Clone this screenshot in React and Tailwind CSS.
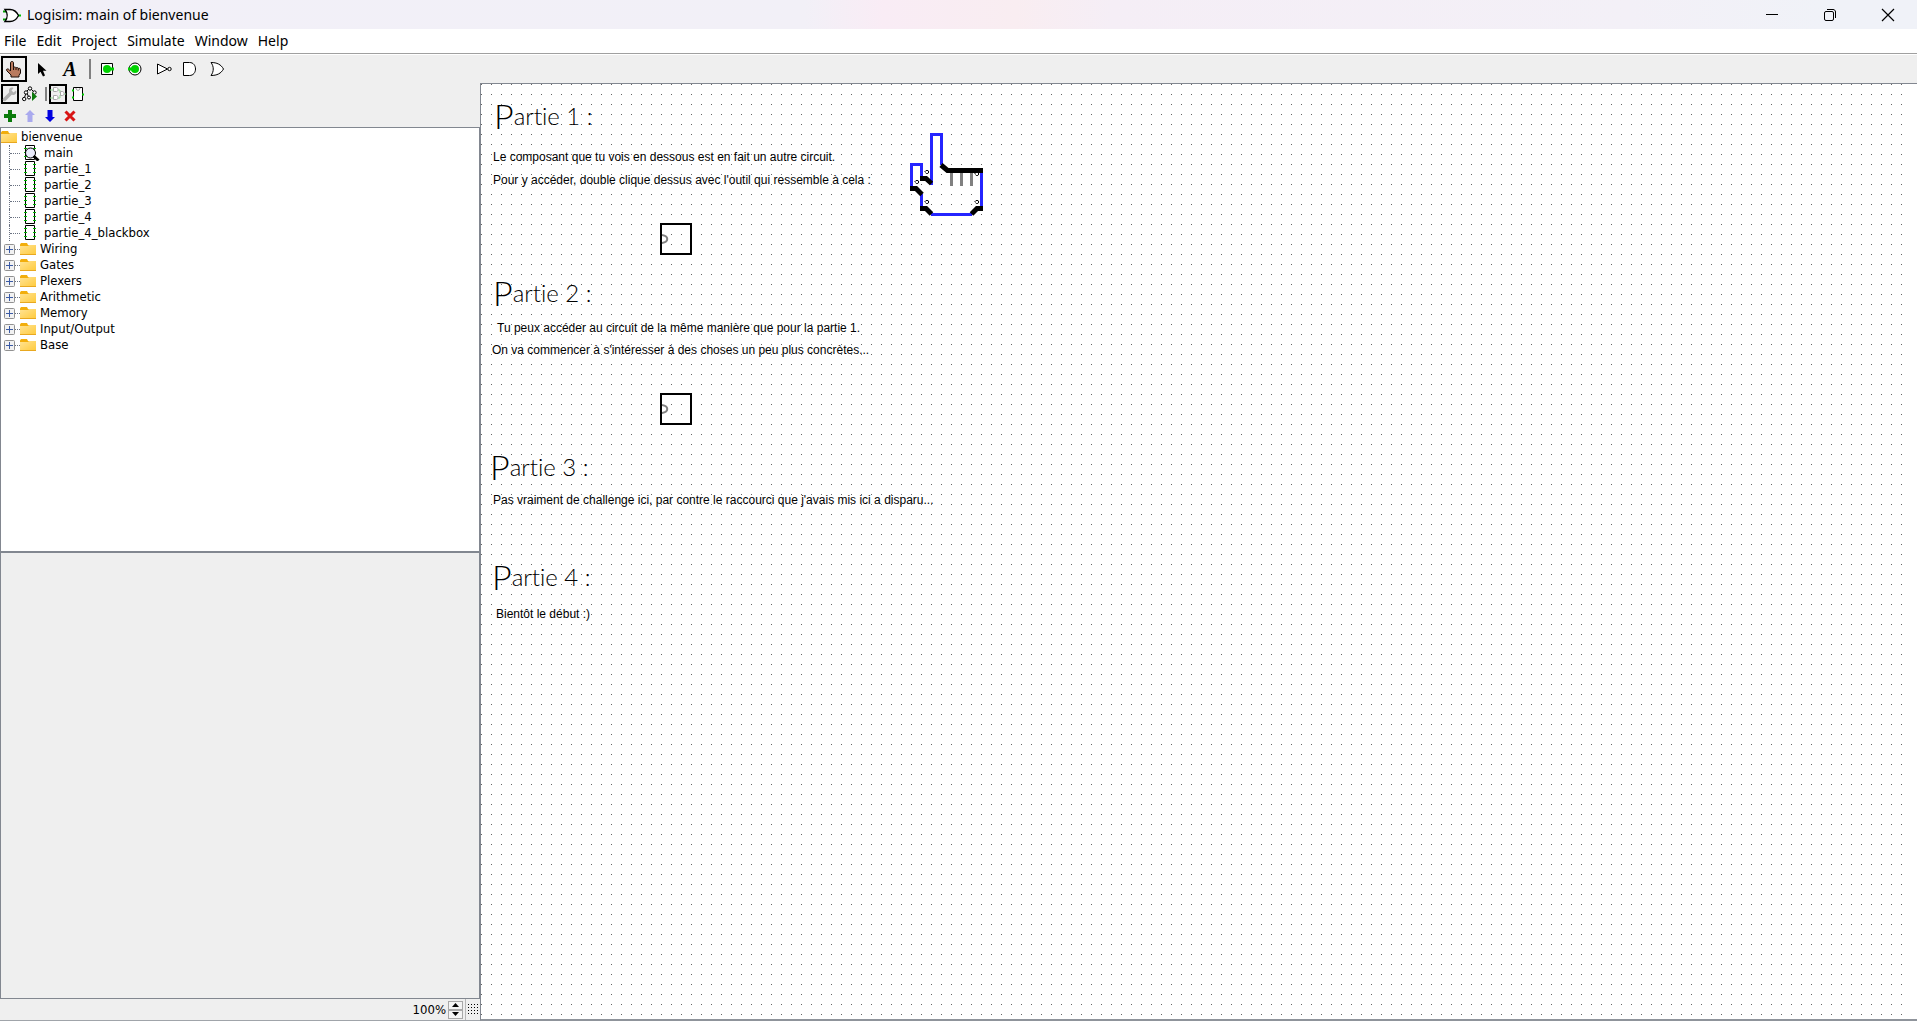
import React, { useState } from "react";

const MENUS = ["File", "Edit", "Project", "Simulate", "Window", "Help"];
const CIRCUITS = ["main", "partie_1", "partie_2", "partie_3", "partie_4", "partie_4_blackbox"];
const LIBRARIES = ["Wiring", "Gates", "Plexers", "Arithmetic", "Memory", "Input/Output", "Base"];

function Svg({ size = 20, children }) {
  return (
    <svg width={size} height={size} viewBox={`0 0 ${size} ${size}`} className="block shrink-0" fill="none" aria-hidden="true">
      {children}
    </svg>
  );
}

function LogoIcon() {
  return (
    <Svg size={18}>
      <path d="M0 5.500h4M0 13.500h4" stroke="#00a000" strokeWidth="2" />
      <path d="M14 9.500h4" stroke="#00c000" strokeWidth="2" />
      <path d="M2 3.500h5c4 0 7 3 8.500 6-1.500 3-4.500 6-8.500 6H2c3-4 3-8 0-12z" fill="#fff" stroke="#000" strokeWidth="1.300" />
    </Svg>
  );
}

function HandIcon() {
  return (
    <Svg>
      <path
        d="M8 2.500c1 0 1.500.5 1.500 1.500v4.500c1-.8 2-.6 2.500.3 1-.5 2-.3 2.300.6 1.200-.4 2.200.1 2.200 1.300V14l-1.500 2.500V18h-8v-2L3 12c-.7-1-.7-1.700 0-2 1-.3 2 .2 3.500 2V4c0-1 .5-1.500 1.500-1.500z"
        fill="#b97a5e"
        stroke="#1a0d08"
      />
      <path d="M9.500 8.500V11M12 9v2M14.300 9.500v2" stroke="#1a0d08" />
    </Svg>
  );
}

function ArrowIcon() {
  return (
    <Svg>
      <path d="M6 4v11l2.500-2.300L11 17.500l2-1-2-4.700h3.500z" fill="#000" />
    </Svg>
  );
}

function InputPinIcon() {
  return (
    <Svg>
      <path d="M4.500 4.500h11v11h-11z" fill="#fff" stroke="#000" />
      <circle cx="10" cy="10" r="4" fill="#00d200" />
      <path d="M13 10h4" stroke="#00d200" strokeWidth="3" />
    </Svg>
  );
}

function OutputPinIcon() {
  return (
    <Svg>
      <circle cx="10" cy="10" r="6" fill="#fff" stroke="#000" />
      <circle cx="10" cy="10" r="4" fill="#00d200" />
      <path d="M3 10h4" stroke="#00d200" strokeWidth="3" />
    </Svg>
  );
}

function NotIcon() {
  return (
    <Svg>
      <path d="M4.500 5v10l10-5z" fill="#fff" stroke="#000" />
      <circle cx="16.500" cy="10" r="1.700" fill="#fff" stroke="#000" />
    </Svg>
  );
}

function AndIcon() {
  return (
    <Svg>
      <path d="M2.500 3.500h6c8 0 8 13 0 13h-6z" fill="#fff" stroke="#000" />
    </Svg>
  );
}

function OrIcon() {
  return (
    <Svg>
      <path d="M2 3.500c6 0 10 2 12.500 6.500C12 14.500 8 16.500 2 16.500c3-4 3-9 0-13z" fill="#fff" stroke="#000" />
    </Svg>
  );
}

function WrenchIcon() {
  return (
    <Svg size={16}>
      <path d="M2.500 13.500L9 7" stroke="#b0b0b0" strokeWidth="3.500" strokeLinecap="round" />
      <path d="M14 4.500l-2.500 2-2-2 2-2.500C9 .8 6.500 2.500 7 5.500 7.500 8 9.500 9.500 12 9c2-.6 3-2.500 2-4.500z" fill="#b0b0b0" />
    </Svg>
  );
}

function SimTreeIcon() {
  return (
    <Svg size={16}>
      <path d="M7 3L3 7M9 3l4 4M4 7l-2 6M5 7l2 5" stroke="#000" />
      <circle cx="8" cy="2.500" r="1.700" fill="#fff" stroke="#000" />
      <circle cx="4" cy="6.500" r="1.700" fill="#fff" stroke="#000" />
      <circle cx="12.500" cy="6.500" r="1.700" fill="#fff" stroke="#000" />
      <circle cx="2.200" cy="13" r="1.700" fill="#fff" stroke="#000" />
      <circle cx="7" cy="11.500" r="1.500" fill="#fff" stroke="#000" />
      <path d="M10 6v9l5-4.500z" fill="#0b7a0b" />
    </Svg>
  );
}

function LayoutIcon() {
  return (
    <Svg size={16}>
      <path d="M0 4h3M0 12h3M8 4h2v3h2M8 12h2V9h2M14 8h2" stroke="#8fdc8f" />
      <path d="M3.500 1.500h3c2 0 2 4 0 4h-3zM3.500 9.500h3c2 0 2 4 0 4h-3zM10.500 5.500h2c2 0 2 4 0 4h-2z" fill="#fff" stroke="#a8a8a8" />
    </Svg>
  );
}

function AppearanceIcon() {
  return (
    <Svg size={16}>
      <path d="M3.500 1.500h9v13h-9z" fill="#fff" stroke="#000" />
      <path d="M6 2c0 3 4 3 4 0" stroke="#999" />
      <path d="M2 4.500h2M2 11.500h2M12 8.500h2" stroke="#00c800" strokeWidth="2" />
    </Svg>
  );
}

function FolderIcon() {
  return (
    <svg width="16" height="14" viewBox="0 0 16 14" className="block shrink-0" aria-hidden="true">
      <defs>
        <linearGradient id="folder" x1="0" y1="0" x2="1" y2="1">
          <stop offset="0" stopColor="#ffe394" />
          <stop offset="1" stopColor="#ffcb3d" />
        </linearGradient>
      </defs>
      <path d="M0 2.500L1 1h6l1 2h8v4H0z" fill="#f2ae0c" />
      <path d="M0 4h8l1-1h7v9.500H0z" fill="url(#folder)" />
      <path d="M0 12.500h16" stroke="#e8a820" />
    </svg>
  );
}

function CircuitIcon({ active }) {
  return (
    <svg width="16" height="16" viewBox="0 0 16 16" className="block shrink-0" fill="none" aria-hidden="true">
      <path d="M1.500 .5h9v14h-9z" fill="#fff" stroke="#000" />
      <path d="M0 3.500h3M0 7.500h3M0 11.500h3M9 3.500h3M9 7.500h3M9 11.500h3" stroke="#00b400" />
      {active && (
        <>
          <circle cx="6.500" cy="8" r="5" fill="#e9ebfb" stroke="#000" />
          <path d="M9.500 11l5 4.500" stroke="#000" strokeWidth="3" />
        </>
      )}
    </svg>
  );
}

function ToolButton({ label, active, children }) {
  return (
    <button
      type="button"
      aria-label={label}
      aria-pressed={!!active}
      className={
        active
          ? "mx-px flex size-[26px] items-center justify-center border-2 border-black"
          : "mx-px flex size-[26px] items-center justify-center"
      }
    >
      {children}
    </button>
  );
}

function SmallButton({ label, active, children }) {
  return (
    <button
      type="button"
      aria-label={label}
      className={
        active
          ? "mx-px flex h-5 w-[18px] items-center justify-center border-2 border-black"
          : "mx-px flex h-5 w-[18px] items-center justify-center"
      }
    >
      {children}
    </button>
  );
}

function TitleBar() {
  return (
    <header className="flex h-[29px] shrink-0 items-center justify-between bg-[linear-gradient(90deg,#f2f0f8_0%,#f2f0f7_42%,#f9ecf5_46%,#f9edf1_53%,#f5eef6_58%,#f3f0f7_85%,#f0f2f8_95%)]">
      <div className="flex h-7 items-center gap-[6px] pl-[3px]">
        <LogoIcon />
        <h1 className="text-[14px] leading-5">Logisim: main of bienvenue</h1>
      </div>
      <div className="flex h-7">
        <button type="button" aria-label="Minimize" className="flex w-[58px] items-center justify-center">
          <Svg size={14}><path d="M1 6.500h12" stroke="#000" /></Svg>
        </button>
        <button type="button" aria-label="Restore" className="flex w-[58px] items-center justify-center">
          <Svg size={14}>
            <rect x="1.500" y="3.500" width="9" height="9" rx="1.500" stroke="#000" />
            <path d="M4 1.500h6c1.500 0 2.500 1 2.500 2.500v6" stroke="#000" />
          </Svg>
        </button>
        <button type="button" aria-label="Close" className="flex w-[58px] items-center justify-center">
          <Svg size={14}><path d="M1 1l12 12M13 1L1 13" stroke="#000" strokeWidth="1.200" /></Svg>
        </button>
      </div>
    </header>
  );
}

function Explorer() {
  return (
    <ul className="h-[425px] shrink-0 border border-[#828790] bg-white pt-px font-['DejaVu_Sans_Condensed','DejaVu_Sans',sans-serif] text-[13px] leading-4">
      <li>
        <div className="flex h-4 items-center gap-1">
          <FolderIcon />
          <span>bienvenue</span>
        </div>
        <ul>
          {CIRCUITS.map((name) => (
            <li key={name} className="ml-2 flex h-4 items-center border-l border-dotted border-gray-500">
              <span className="w-[10px] border-t border-dotted border-gray-500" />
              <span className="ml-1 flex w-5 shrink-0">
                <CircuitIcon active={name === "main"} />
              </span>
              <span>{name}</span>
            </li>
          ))}
          {LIBRARIES.map((name) => (
            <li key={name} className="flex h-4 items-center pl-[3px]">
              <button type="button" aria-label={`Expand ${name}`} className="block">
                <Svg size={11}>
                  <rect x=".5" y=".5" width="10" height="10" rx="1" fill="#f2f2f2" stroke="#919191" />
                  <path d="M2 5.500h7M5.500 2v7" stroke="#3b5ba5" />
                </Svg>
              </button>
              <span className="w-[5px] border-t border-dotted border-gray-500" />
              <FolderIcon />
              <span className="ml-1">{name}</span>
            </li>
          ))}
        </ul>
      </li>
    </ul>
  );
}

function ZoomBar() {
  const [zoom, setZoom] = useState(100);
  return (
    <div className="flex h-[22px] shrink-0 items-center justify-end border-b border-[#a0a4aa]">
      <input
        aria-label="Zoom"
        value={`${zoom}%`}
        onChange={(e) => setZoom(parseInt(e.target.value, 10) || 0)}
        className="min-w-0 grow bg-transparent pr-[2px] text-right font-['DejaVu_Sans_Condensed','DejaVu_Sans',sans-serif] text-[13px] leading-4 outline-none"
      />
      <div className="flex w-[15px] flex-col">
        <button type="button" aria-label="Zoom in" onClick={() => setZoom(zoom + 10)} className="flex h-[9px] items-center justify-center border border-[#a8a8a8] bg-[#f4f4f4]">
          <svg width="7" height="4" viewBox="0 0 7 4"><path d="M0 4L3.500 0 7 4z" /></svg>
        </button>
        <button type="button" aria-label="Zoom out" onClick={() => setZoom(zoom - 10)} className="flex h-[9px] items-center justify-center border border-[#a8a8a8] bg-[#f4f4f4]">
          <svg width="7" height="4" viewBox="0 0 7 4"><path d="M0 0h7L3.500 4z" /></svg>
        </button>
      </div>
      <button type="button" aria-label="Show grid" className="ml-[2px] flex h-full w-[15px] items-center justify-center border-l border-[#b8b8b8]">
        <Svg size={11}>
          <path d="M0 .5h11M0 3.500h11M0 6.500h11M0 9.500h11" stroke="#000" strokeDasharray="1 2" />
        </Svg>
      </button>
    </div>
  );
}

function Heading({ className, number }) {
  return (
    <h2 className={`absolute whitespace-pre font-['Lato',sans-serif] text-[24px] leading-10 font-light [font-variant-ligatures:none] ${className}`}>
      <span className="align-[-4px] text-[34px]">P</span>artie {number} :
    </h2>
  );
}

function Note({ className, children }) {
  return (
    <p className={`absolute font-['Liberation_Sans',Arial,sans-serif] text-[12px] leading-4 whitespace-nowrap ${className}`}>
      {children}
    </p>
  );
}

function Subcircuit({ className, label }) {
  return (
    <button type="button" aria-label={label} className={`absolute size-8 border-2 border-black ${className}`}>
      <svg width="28" height="28" viewBox="0 0 28 28" fill="none" className="block">
        <path d="M0 10c7 1 7 7 0 8" stroke="#808080" strokeWidth="2" />
      </svg>
    </button>
  );
}

function BigHand() {
  const loops = [[26, 47], [16, 57], [26, 77], [76, 77], [76, 49]];
  return (
    <svg width="90" height="95" viewBox="0 0 90 95" fill="none" className="absolute top-[41px] left-[419px]" aria-label="Poke tool">
      <g stroke="#2424ff" strokeWidth="3">
        <path d="M31.500 60V9.500h10V40M11.500 62V39.500h10V52M21.500 69v12M31 89.500h41M81.500 48v33" />
      </g>
      <g stroke="#808080" strokeWidth="3">
        <path d="M51.500 48v13M61.500 48v13M71.500 48v13" />
      </g>
      <g stroke="#000" strokeWidth="5">
        <path d="M41 40l6.500 5.500H83M20 53.500h6l5.500 5M10 63.500h6l6 6M20 83.500h6l5.500 5.500M83 83.500h-6L71.500 89" />
      </g>
      <g stroke="#000">
        {loops.map(([x, y]) => (
          <path key={`${x}-${y}`} d={`M${x - 1.5} ${y}l1.500-1.500h2l.8 1.500-1 1.500h-1.500l-.8-1`} />
        ))}
      </g>
    </svg>
  );
}

function Canvas() {
  return (
    <main className="min-w-0 grow border-t border-b-2 border-l border-[#828790] border-b-[#8f949b] bg-white">
      <div className="relative mr-[15px] h-full overflow-hidden">
        <svg width="100%" height="100%" className="absolute inset-0" aria-hidden="true">
          <defs>
            <pattern id="grid" width="10" height="10" patternUnits="userSpaceOnUse">
              <rect width="1" height="1" fill="#666" />
            </pattern>
          </defs>
          <rect width="100%" height="100%" fill="url(#grid)" />
        </svg>
        <Heading number="1" className="top-[12px] left-[13px]" />
        <Note className="top-[65px] left-[12px]">Le composant que tu vois en dessous est en fait un autre circuit.</Note>
        <Note className="top-[88px] left-[12px]">Pour y accéder, double clique dessus avec l'outil qui ressemble à cela :</Note>
        <BigHand />
        <Subcircuit label="partie_1" className="top-[139px] left-[179px]" />
        <Heading number="2" className="top-[189px] left-[12px]" />
        <Note className="top-[236px] left-[16px]">Tu peux accéder au circuit de la même manière que pour la partie 1.</Note>
        <Note className="top-[258px] left-[11px]">On va commencer à s'intéresser à des choses un peu plus concrètes...</Note>
        <Subcircuit label="partie_2" className="top-[309px] left-[179px]" />
        <Heading number="3" className="top-[363px] left-[9px]" />
        <Note className="top-[408px] left-[12px]">Pas vraiment de challenge ici, par contre le raccourci que j'avais mis ici a disparu...</Note>
        <Heading number="4" className="top-[473px] left-[11px]" />
        <Note className="top-[522px] left-[15px]">Bientôt le début :)</Note>
      </div>
    </main>
  );
}

export default function App() {
  return (
    <div className="flex h-screen flex-col overflow-hidden bg-[#efefef] font-['Noto_Sans',sans-serif] text-black">
      <TitleBar />
      <nav className="flex h-[25px] shrink-0 items-center gap-[10px] border-b border-[#a0a0a0] bg-white pl-1 text-[14px] leading-5">
        {MENUS.map((m) => (
          <button key={m} type="button">{m}</button>
        ))}
      </nav>
      <div className="flex h-[29px] shrink-0 items-center border-t border-white">
        <ToolButton label="Poke" active><HandIcon /></ToolButton>
        <ToolButton label="Select"><ArrowIcon /></ToolButton>
        <ToolButton label="Text">
          <span className="font-['Liberation_Serif',serif] text-[20px] leading-5 font-bold italic">A</span>
        </ToolButton>
        <span className="mr-[2px] ml-[5px] h-5 w-[2px] bg-[#808080]" />
        <ToolButton label="Input pin"><InputPinIcon /></ToolButton>
        <ToolButton label="Output pin"><OutputPinIcon /></ToolButton>
        <ToolButton label="NOT gate"><NotIcon /></ToolButton>
        <ToolButton label="AND gate"><AndIcon /></ToolButton>
        <ToolButton label="OR gate"><OrIcon /></ToolButton>
      </div>
      <div className="flex min-h-0 grow">
        <aside className="flex w-[480px] shrink-0 flex-col">
          <div className="flex h-[22px] shrink-0 items-center">
            <SmallButton label="Toolbox" active><WrenchIcon /></SmallButton>
            <SmallButton label="Simulation tree"><SimTreeIcon /></SmallButton>
            <span className="mr-px ml-[5px] h-[14px] w-[2px] bg-[#808080]" />
            <SmallButton label="Edit layout" active><LayoutIcon /></SmallButton>
            <SmallButton label="Edit appearance"><AppearanceIcon /></SmallButton>
          </div>
          <div className="flex h-[22px] shrink-0 items-center">
            <SmallButton label="Add circuit">
              <Svg size={12}><path d="M6 0v12M0 6h12" stroke="#0a7a0a" strokeWidth="4" /></Svg>
            </SmallButton>
            <SmallButton label="Move up">
              <Svg size={12}><path d="M6 0l5 5H8.500v7h-5V5H1z" fill="#a9a9ee" /></Svg>
            </SmallButton>
            <SmallButton label="Move down">
              <Svg size={12}><path d="M6 12l5-5H8.500V0h-5v7H1z" fill="#0000e0" /></Svg>
            </SmallButton>
            <SmallButton label="Remove circuit">
              <Svg size={12}><path d="M1.500 1.500l9 9M10.500 1.500l-9 9" stroke="#d81414" strokeWidth="3" /></Svg>
            </SmallButton>
          </div>
          <Explorer />
          <section aria-label="Attributes" className="min-h-0 grow border border-[#828790]" />
          <ZoomBar />
        </aside>
        <Canvas />
      </div>
    </div>
  );
}
